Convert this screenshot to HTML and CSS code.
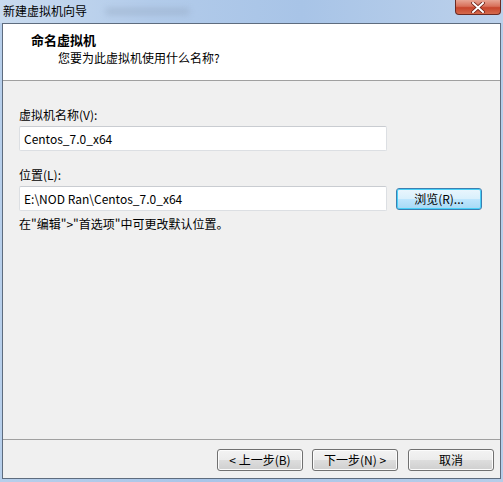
FILE: index.html
```html
<!DOCTYPE html>
<html lang="zh-CN">
<head>
<meta charset="utf-8">
<title>新建虚拟机向导</title>
<link rel="stylesheet" href="styles.css">
</head>
<body>
<div class="window">
  <div class="titlebar">
    <span class="title">新建虚拟机向导</span>
    <span class="glass-blur"></span>
    <span class="spacer"></span>
    <span class="close">
      <svg width="14" height="11" viewBox="0 0 14 11"><path d="M2 1 L12 10 M12 1 L2 10" stroke="#6b1f14" stroke-width="3.6" stroke-linecap="square"/><path d="M2 1 L12 10 M12 1 L2 10" stroke="#ffffff" stroke-width="2" stroke-linecap="square"/></svg>
    </span>
  </div>
  <div class="client">
    <div class="header">
      <div class="h-title">命名虚拟机</div>
      <div class="h-sub">您要为此虚拟机使用什么名称?</div>
    </div>
    <div class="body">
      <div class="label">虚拟机名称(V):</div>
      <div class="row first-row">
        <div class="field">Centos_7.0_x64</div>
      </div>
      <div class="label second">位置(L):</div>
      <div class="row">
        <div class="field">E:\NOD Ran\Centos_7.0_x64</div>
        <div class="btn default browse">浏览(R)...</div>
      </div>
      <div class="note">在"编辑"&gt;"首选项"中可更改默认位置。</div>
    </div>
    <div class="footer">
      <div class="btn">&lt; 上一步(B)</div>
      <div class="btn next">下一步(N) &gt;</div>
      <div class="btn cancel">取消</div>
    </div>
  </div>
</div>
</body>
</html>
```
FILE: styles.css
```css
html, body {
  margin: 0;
  padding: 0;
}
body {
  width: 503px;
  height: 482px;
  overflow: hidden;
  font-family: "Noto Sans CJK SC", "Microsoft YaHei", sans-serif;
  font-size: 12px;
  color: #000;
}
.window {
  width: 503px;
  height: 482px;
  box-sizing: border-box;
  display: flex;
  flex-direction: column;
  background: linear-gradient(90deg, #b7cfeb 0%, #a9c5e8 40%, #b6cde9 100%);
  padding: 0 2px 0 2px;
}
.titlebar {
  height: 23px;
  display: flex;
  align-items: flex-start;
  margin: 0 -2px;
  padding-left: 3px;
  background: linear-gradient(90deg, #c9dbef 0%, #b2cbea 30%, #a8c4e7 60%, #bcd1eb 100%);
}
.title {
  line-height: 22px;
  font-size: 12px;
  color: #000;
  white-space: nowrap;
}
.glass-blur {
  width: 85px;
  height: 7px;
  margin: 8px 0 0 18px;
  background: #93a6bf;
  border-radius: 4px;
  filter: blur(3px);
  opacity: 0.45;
}
.spacer {
  flex: 1;
}
.close {
  width: 46px;
  height: 15px;
  margin-right: 2px;
  box-sizing: border-box;
  border: 1px solid #6b2a22;
  border-top: none;
  border-radius: 0 0 4px 4px;
  background: linear-gradient(180deg, #e8a594 0%, #d8705a 45%, #c7452c 55%, #d56a4c 100%);
  display: flex;
  align-items: center;
  justify-content: center;
}
.client {
  flex: 1;
  display: flex;
  flex-direction: column;
  background: #f0f0f0;
  border: 1px solid #5e6c7e;
  margin-bottom: 3px;
}
.header {
  height: 56px;
  background: #fff;
  border-bottom: 1px solid #a0a0a0;
  box-sizing: content-box;
  padding-left: 28px;
}
.h-title {
  font-weight: bold;
  font-size: 13px;
  line-height: 16px;
  margin-top: 8px;
}
.h-sub {
  line-height: 16px;
  margin-top: 2px;
  padding-left: 27px;
}
.body {
  flex: 1;
  padding: 26px 0 0 16px;
}
.label {
  line-height: 16px;
}
.label.second {
  margin-top: 16px;
}
.row {
  display: flex;
  align-items: center;
  margin-top: 3px;
}
.field {
  width: 368px;
  height: 25px;
  box-sizing: border-box;
  background: #fff;
  border: 1px solid #dcdfe3;
  border-top-color: #c9ccd1;
  border-radius: 2px;
  padding-left: 4px;
  line-height: 23px;
  white-space: nowrap;
}
.btn {
  width: 86px;
  height: 22px;
  box-sizing: border-box;
  border: 1px solid #707070;
  border-radius: 3px;
  background: linear-gradient(180deg, #f3f3f3 0%, #ececec 48%, #dddddd 52%, #cfcfcf 100%);
  box-shadow: inset 0 0 0 1px #fcfcfc;
  text-align: center;
  line-height: 20px;
  white-space: nowrap;
}
.btn.default {
  border-color: #3c7fb1;
  background: linear-gradient(180deg, #eaf6fd 0%, #d9f0fc 48%, #bee6fd 52%, #a7d9f5 100%);
  box-shadow: inset 0 0 0 1px #48d0f8;
}
.browse {
  margin-left: 9px;
}
.note {
  line-height: 16px;
  margin-top: 5px;
}
.footer {
  display: flex;
  justify-content: flex-end;
  border-top: 1px solid #a0a0a0;
  padding: 9px 6px 7px 0;
}
.next {
  margin-left: 9px;
}
.cancel {
  margin-left: 10px;
}
```
